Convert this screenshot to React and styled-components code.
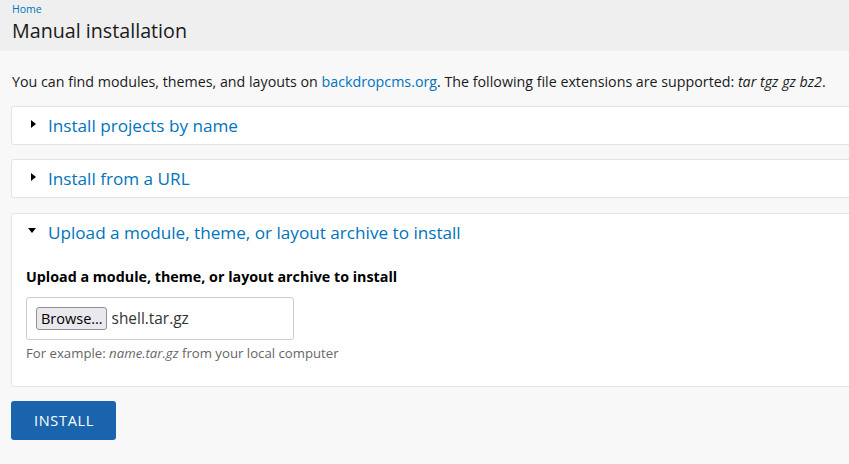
import React from "react";
import styled, { createGlobalStyle } from "styled-components";

const Global = createGlobalStyle`
  html, body { margin: 0; padding: 0; overflow: hidden; }
  body {
    background: #f8f8f8;
    font-family: "Open Sans", "Noto Sans", sans-serif;
    color: #1a1a1a;
  }
  * { box-sizing: border-box; }
`;

const Header = styled.header`
  background: #efefef;
  height: 51px;
  padding: 2px 12px 0;
`;

const Crumb = styled.a`
  display: block;
  font-size: 10.5px;
  line-height: 14px;
  color: #0074bd;
  text-decoration: none;
`;

const Title = styled.h1`
  margin: 2px 0 0;
  font-size: 19.7px;
  font-weight: 400;
  line-height: 26px;
  color: #1a1a1a;
`;

const Main = styled.main`
  padding: 20px 0 0 11px;
  width: 880px;
`;

const Intro = styled.p`
  margin: 0 0 0 1px;
  font-size: 14.25px;
  line-height: 22px;
  color: #1a1a1a;
  a { color: #0074bd; text-decoration: none; }
`;

const Fieldset = styled.section`
  background: #fff;
  border: 1px solid #e3e3e3;
  border-radius: 3px;
  margin-top: ${(p) => p.$mt}px;
`;

const Summary = styled.div`
  display: flex;
  align-items: center;
  height: ${(p) => (p.$open ? 38 : 36)}px;
  margin-top: ${(p) => (p.$open ? 0 : 1)}px;
  padding-left: ${(p) => (p.$open ? 16 : 19)}px;
  gap: 12px;
  font-size: 17.15px;
  line-height: 22px;
  color: #0074bd;
`;

const Arrow = styled.span`
  display: inline-block;
  width: 0;
  height: 0;
  ${(p) =>
    p.$open
      ? `border-left: 4px solid transparent; border-right: 4px solid transparent; border-top: 5px solid #000; margin-top: -5px;`
      : `border-top: 4px solid transparent; border-bottom: 4px solid transparent; border-left: 5px solid #000; margin-top: -5px;`}
`;

const Body = styled.div`
  padding: 15px 14px 24px;
`;

const Label = styled.div`
  font-size: 14.3px;
  font-weight: 700;
  line-height: 20px;
  color: #000;
`;

const FileBox = styled.div`
  margin-top: 10px;
  width: 268px;
  height: 43px;
  border: 1px solid #ccc;
  border-radius: 3px;
  background: #fff;
  display: flex;
  align-items: center;
  padding-left: 9px;
  gap: 5px;
  font-size: 15.4px;
  line-height: 20px;
  color: #333;
`;

const Browse = styled.span`
  display: inline-flex;
  align-items: center;
  height: 23px;
  padding: 0 3px 0 4px;
  border: 1px solid #8f8f9d;
  border-radius: 3px;
  background: #e9e9ed;
  font-size: 14.5px;
  color: #000;
`;

const Hint = styled.div`
  margin-top: 5px;
  font-size: 13.2px;
  line-height: 17px;
  color: #666;
`;

const Button = styled.button`
  margin-top: 14px;
  width: 105px;
  height: 39px;
  border: 0;
  border-radius: 3px;
  background: #1a64ae;
  color: #fff;
  font-family: "Open Sans", "Noto Sans", sans-serif;
  font-size: 14.5px;
  letter-spacing: 0.7px;
  padding: 0 0 0 1px;
`;

function Collapsed({ title, mt }) {
  return (
    <Fieldset $mt={mt}>
      <Summary>
        <Arrow />
        {title}
      </Summary>
    </Fieldset>
  );
}

export default function App() {
  return (
    <>
      <Global />
      <Header>
        <Crumb href="#">Home</Crumb>
        <Title>Manual installation</Title>
      </Header>
      <Main>
        <Intro>
          You can find modules, themes, and layouts on <a href="#">backdropcms.org</a>. The following file
          extensions are supported: <em>tar tgz gz bz2</em>.
        </Intro>
        <Collapsed mt={13} title="Install projects by name" />
        <Collapsed mt={14} title="Install from a URL" />
        <Fieldset $mt={15}>
          <Summary $open>
            <Arrow $open />
            Upload a module, theme, or layout archive to install
          </Summary>
          <Body>
            <Label>Upload a module, theme, or layout archive to install</Label>
            <FileBox>
              <Browse>Browse…</Browse>
              shell.tar.gz
            </FileBox>
            <Hint>
              For example: <em>name.tar.gz</em> from your local computer
            </Hint>
          </Body>
        </Fieldset>
        <Button>INSTALL</Button>
      </Main>
    </>
  );
}
